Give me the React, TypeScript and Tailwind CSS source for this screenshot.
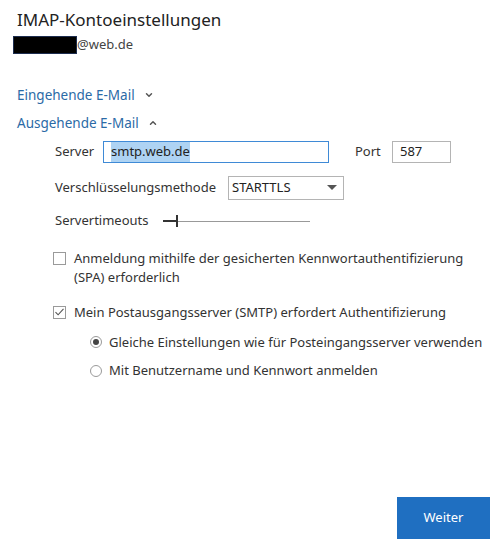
import { ChevronDown, ChevronUp } from "lucide-react";

const font = { fontFamily: '"Segoe UI", "Noto Sans", sans-serif' };

export default function App() {
  return (
    <div
      className="relative h-[550px] w-[501px] bg-white text-[13px] text-[#333]"
      style={font}
    >
      <div className="px-4 pt-[8px]">
        <h1 className="pl-[1px] text-[17px] leading-[24px] text-[#222]">IMAP-Kontoeinstellungen</h1>
        <div className="mt-[3px] flex items-center">
          <span className="-ml-[3px] h-[18px] w-[64px] border border-[#1d2d4f] bg-black" />
          <span className="text-[13px] text-[#444]">@web.de</span>
        </div>

        {/* sections */}
        <button className="mt-[30px] flex items-center gap-[9px] pl-[1px] text-[13.5px] text-[#2b6aa6]">
          Eingehende E-Mail
          <ChevronDown className="h-[10px] w-[10px] text-[#555]" strokeWidth={3.5} />
        </button>
        <button className="mt-[8px] flex items-center gap-[9px] pl-[1px] text-[13.5px] text-[#2b6aa6]">
          Ausgehende E-Mail
          <ChevronUp className="h-[10px] w-[10px] text-[#555]" strokeWidth={3.5} />
        </button>

        <div className="ml-[39px] mt-[8px]">
          <div className="flex items-center">
            <span className="w-[48px]">Server</span>
            <div className="flex h-[22px] w-[226px] items-center border border-[#3f8ad6] px-[7px]">
              <span className="bg-[#aed3f3] text-[#222]">smtp.web.de</span>
            </div>
            <span className="ml-[26px] w-[37px]">Port</span>
            <div className="flex h-[22px] w-[59px] items-center border border-[#b4b4b4] px-[7px] text-[#222]">587</div>
          </div>

          <div className="mt-[13px] flex items-center">
            <span className="w-[173px]">Verschlüsselungsmethode</span>
            <div className="flex h-[24px] w-[116px] items-center justify-between border border-[#b4b4b4] pl-[3px] pr-[6px] text-[#222]">
              STARTTLS
              <svg width="10" height="6" viewBox="0 0 10 6">
                <path d="M0 0h10L5 5z" fill="#555" />
              </svg>
            </div>
          </div>

          <div className="mt-[11px] flex items-center">
            <span className="w-[108px]">Servertimeouts</span>
            <div className="relative h-[14px] w-[147px]">
              <div className="absolute left-0 right-0 top-[7px] h-px bg-[#999]" />
              <div className="absolute left-0 top-[6px] h-[2px] w-[14px] bg-[#333]" />
              <div className="absolute left-[13px] top-[1px] h-[12px] w-[2px] bg-[#333]" />
            </div>
          </div>

          <label className="-ml-[2px] mt-[18px] flex items-start">
            <span className="mt-[3px] h-[13px] w-[13px] shrink-0 border border-[#9a9a9a]" />
            <span className="ml-[8px] leading-[19px]">
              Anmeldung mithilfe der gesicherten Kennwortauthentifizierung
              <br />
              (SPA) erforderlich
            </span>
          </label>

          <label className="-ml-[2px] mt-[16px] flex items-start">
            <span className="mt-[3px] flex h-[13px] w-[13px] shrink-0 items-center justify-center border border-[#9a9a9a]">
              <svg width="9" height="8" viewBox="0 0 9 8">
                <path d="M0.5 4.2l2.6 2.6L8.5 0.8" fill="none" stroke="#555" strokeWidth="1.1" />
              </svg>
            </span>
            <span className="ml-[8px] leading-[19px]">Mein Postausgangsserver (SMTP) erfordert Authentifizierung</span>
          </label>

          <div className="ml-[35px] mt-[11px] flex items-center">
            <span className="flex h-[12px] w-[12px] items-center justify-center rounded-full border border-[#9a9a9a]">
              <span className="h-[6px] w-[6px] rounded-full bg-[#444]" />
            </span>
            <span className="ml-[7px]">Gleiche Einstellungen wie für Posteingangsserver verwenden</span>
          </div>
          <div className="ml-[35px] mt-[9px] flex items-center">
            <span className="h-[12px] w-[12px] rounded-full border border-[#9a9a9a]" />
            <span className="ml-[7px]">Mit Benutzername und Kennwort anmelden</span>
          </div>
        </div>
      </div>

      <button className="absolute left-[397px] top-[497px] h-[42px] w-[93px] bg-[#1f6fc1] text-[13px] text-white">
        Weiter
      </button>
    </div>
  );
}
